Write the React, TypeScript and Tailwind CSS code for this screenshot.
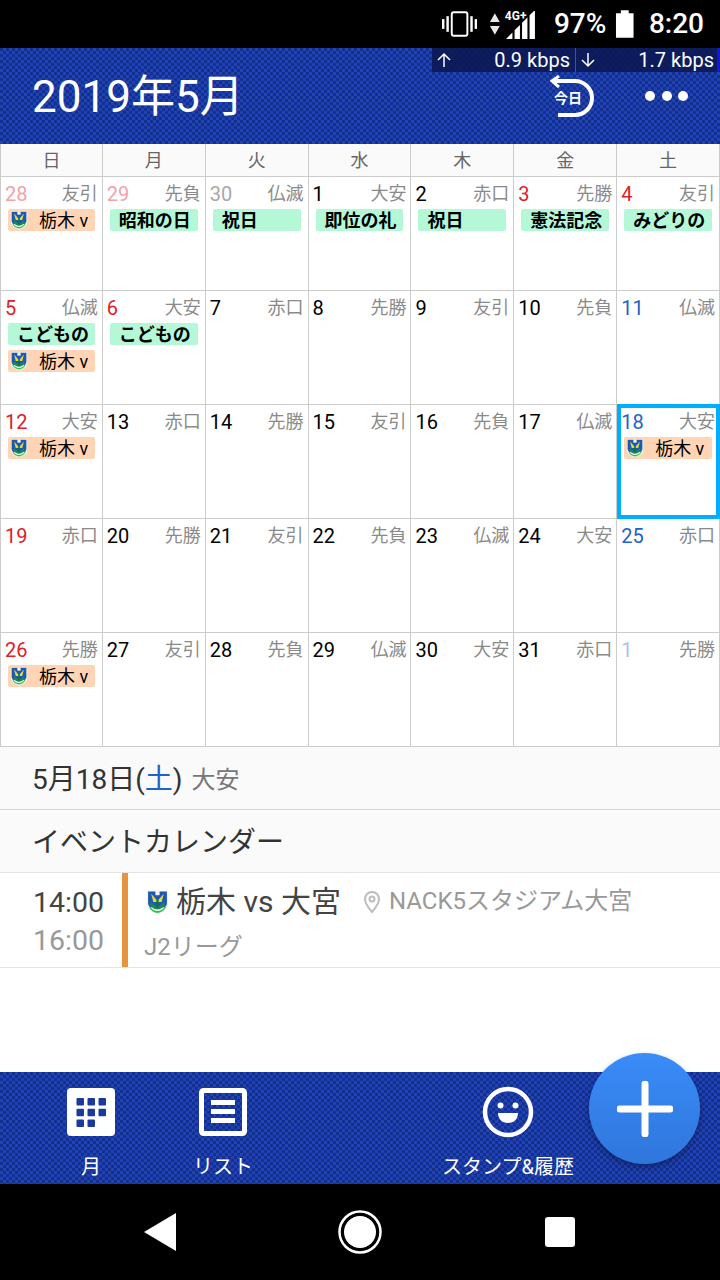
import React from 'react';

const FONT = "font-['Roboto','Noto_Sans_CJK_JP',sans-serif]";
const TEXTURE =
  'bg-[#1a38a4] bg-[conic-gradient(#1f42b6_25%,#14308f_0_50%,#1f42b6_0_75%,#14308f_0)] bg-[length:6px_6px]';

type Ev = 'team' | string;
type Day = { d: number; r: string; c?: string; ev?: Ev[]; sel?: boolean };

const WEEK = ['日', '月', '火', '水', '木', '金', '土'];
const RED = 'text-[#e0202a]';
const BLUE = 'text-[#1e63c8]';

const DAYS: Day[] = [
  { d: 28, r: '友引', c: 'text-[#f2a3a8]', ev: ['team'] },
  { d: 29, r: '先負', c: 'text-[#f2a3a8]', ev: ['昭和の日'] },
  { d: 30, r: '仏滅', c: 'text-[#a8a8a8]', ev: ['祝日'] },
  { d: 1, r: '大安', ev: ['即位の礼'] },
  { d: 2, r: '赤口', ev: ['祝日'] },
  { d: 3, r: '先勝', c: RED, ev: ['憲法記念'] },
  { d: 4, r: '友引', c: RED, ev: ['みどりの'] },
  { d: 5, r: '仏滅', c: RED, ev: ['こどもの', 'team'] },
  { d: 6, r: '大安', c: RED, ev: ['こどもの'] },
  { d: 7, r: '赤口' },
  { d: 8, r: '先勝' },
  { d: 9, r: '友引' },
  { d: 10, r: '先負' },
  { d: 11, r: '仏滅', c: BLUE },
  { d: 12, r: '大安', c: RED, ev: ['team'] },
  { d: 13, r: '赤口' },
  { d: 14, r: '先勝' },
  { d: 15, r: '友引' },
  { d: 16, r: '先負' },
  { d: 17, r: '仏滅' },
  { d: 18, r: '大安', c: BLUE, ev: ['team'], sel: true },
  { d: 19, r: '赤口', c: RED },
  { d: 20, r: '先勝' },
  { d: 21, r: '友引' },
  { d: 22, r: '先負' },
  { d: 23, r: '仏滅' },
  { d: 24, r: '大安' },
  { d: 25, r: '赤口', c: BLUE },
  { d: 26, r: '先勝', c: RED, ev: ['team'] },
  { d: 27, r: '友引' },
  { d: 28, r: '先負' },
  { d: 29, r: '仏滅' },
  { d: 30, r: '大安' },
  { d: 31, r: '赤口' },
  { d: 1, r: '先勝', c: 'text-[#a9c4ec]' },
];

const Crest = ({ w, h }: { w: number; h: number }) => (
  <svg width={w} height={h} viewBox="0 0 22 24" className="shrink-0">
    <path d="M1 1h20v13c0 5-5 8-10 9.500C6 22 1 19 1 14z" fill="#f4f4ee" />
    <path d="M2 2h18v11c0 2-1 3-2 4H4c-1-1-2-2-2-4z" fill="#1c5ab0" />
    <path d="M5 4l6 7 6-7-2 8h-8z" fill="#e8d83c" />
    <path d="M9 1.500h4v4h-4z" fill="#f4f4ee" />
    <path d="M5 12c2 3 4 4 6 4s4-1 6-4l1 3c-2 3-5 4-7 4s-5-1-7-4z" fill="#1c8a58" />
    <path d="M10 10h2v8h-2z" fill="#16703c" />
    <path d="M3 17c2 4 5 5 8 5.500 3-.5 6-1.500 8-5.500l-1-.5c-2 3-4 4-7 4s-5-1-7-4z" fill="#2fbe58" />
  </svg>
);

const EventBar = ({ ev }: { ev: Ev }) =>
  ev === 'team' ? (
    <div className="flex h-[22px] items-center rounded-[2px] bg-[#ffd5b5] pl-[2px] text-[18px] leading-none text-black">
      <Crest w={18} h={20} />
      <span className="mt-[2px] ml-[11px] whitespace-nowrap">栃木 v</span>
    </div>
  ) : (
    <div className="flex h-[22px] items-center rounded-[2px] bg-[#b4f8d8] pt-[2px] pl-[9px] text-[18px] leading-none font-bold whitespace-nowrap text-black">
      {ev}
    </div>
  );

const Cell = ({ day, first }: { day: Day; first: boolean }) => (
  <div className={`relative border-r border-b border-[#cccccc] bg-white ${first ? 'border-l' : ''}`}>
    <div className="flex items-start justify-between pt-[7px] pr-[4px] pl-[4px] leading-none">
      <span className={`text-[20px] leading-[20px] ${day.c ?? 'text-black'}`}>{day.d}</span>
      <span className="text-[18px] leading-[20px] text-[#8a8a8a]">{day.r}</span>
    </div>
    <div className="mt-[5px] flex flex-col gap-[5px] px-[7px]">
      {day.ev?.map((e, i) => <EventBar key={i} ev={e} />)}
    </div>
    {day.sel && <div className="absolute inset-[-1px_-1px_-1px_0] border-[4px] border-[#00aeff]" />}
  </div>
);

const StatusBar = () => (
  <div className="flex h-[48px] items-center bg-black pr-[16px] pl-[442px] text-white">
    <svg width="36" height="28" viewBox="0 0 36 28" fill="none">
      <rect x="10" y="2" width="16" height="24" rx="2" stroke="#fff" strokeWidth="2" />
      <rect x="0" y="9" width="2.500" height="10" fill="#fff" />
      <rect x="4.500" y="6" width="2.500" height="16" fill="#fff" />
      <rect x="29" y="6" width="2.500" height="16" fill="#fff" />
      <rect x="33.500" y="9" width="2.500" height="10" fill="#fff" />
    </svg>
    <svg width="12" height="24" viewBox="0 0 12 24" className="ml-[12px]" fill="#e8e8e8">
      <path d="M6 1l5 9H1z" />
      <path d="M1 14h10l-5 9z" />
    </svg>
    <div className="relative ml-[1px] h-[32px] w-[38px]">
      <span className="absolute top-[2px] left-[3px] text-[12px] leading-none font-bold">4G+</span>
      <svg width="30" height="28" viewBox="0 0 28 26" className="absolute top-[3px] left-[4px]" fill="#fff">
        <path d="M0 26l6-6v6zM8 26v-8l5-5v13zM15 26V11l5-5v20zM22 26V4l5-5v27z" />
      </svg>
    </div>
    <span className="ml-[15px] text-[28px] leading-none font-medium">97%</span>
    <svg width="20" height="28" viewBox="0 0 20 28" className="ml-[9px]" fill="#fff">
      <path d="M6 0h8v3h5v25H1V3h5z" />
    </svg>
    <span className="ml-[14px] text-[28px] leading-none font-medium">8:20</span>
  </div>
);

const TodayIcon = () => (
  <svg width="46" height="46" viewBox="0 0 46 46" fill="none">
    <path d="M4 6h21a17 17 0 0 1 0 34H8" stroke="#fff" strokeWidth="4" />
    <path d="M9 1L2 6l7 6" stroke="#fff" strokeWidth="3" />
  </svg>
);

const Arrow = ({ down }: { down?: boolean }) => (
  <svg width="16" height="16" viewBox="0 0 16 16" fill="none" className={down ? 'rotate-180' : ''}>
    <path d="M8 15V2M2 8l6-6 6 6" stroke="#fff" strokeWidth="1.500" />
  </svg>
);

const Header = () => (
  <div className={`relative flex h-[96px] items-center pl-[32px] ${TEXTURE}`}>
    <span className="mt-[2px] text-[44px] leading-none text-white">2019年5月</span>
    <div className="ml-auto flex items-center pr-[32px]">
      <div className="relative mt-[4px] mr-[49px] h-[46px] w-[46px]">
        <TodayIcon />
        <span className="absolute top-[16px] left-[4px] text-[14px] leading-none font-bold text-white">今日</span>
      </div>
      <div className="flex gap-[6.500px]">
        <span className="h-[10px] w-[10px] rounded-full bg-white" />
        <span className="h-[10px] w-[10px] rounded-full bg-white" />
        <span className="h-[10px] w-[10px] rounded-full bg-white" />
      </div>
    </div>
    <div className="absolute top-0 right-0 flex h-[24px] w-[288px] items-center border-r-[3px] border-[#1018e0] bg-[#0b1650d8] text-[20px] leading-none text-white">
      <div className="flex h-full w-[143px] items-center justify-between pr-[5px] pl-[4px]">
        <Arrow />
        <span>0.9 kbps</span>
      </div>
      <div className="flex h-full flex-1 items-center justify-between border-l border-[#c0263a] pr-[3px] pl-[4px]">
        <Arrow down />
        <span>1.7 kbps</span>
      </div>
    </div>
  </div>
);

const Calendar = () => (
  <div>
    <div className="grid h-[33px] grid-cols-7 border-b border-[#cccccc] bg-[#fafafa]">
      {WEEK.map((w, i) => (
        <div
          key={w}
          className={`flex items-center justify-center border-r border-[#cccccc] text-[18px] text-[#666666] ${i === 0 ? 'border-l' : ''}`}
        >
          {w}
        </div>
      ))}
    </div>
    <div className="grid grid-cols-7 grid-rows-[repeat(5,114px)]">
      {DAYS.map((day, i) => (
        <Cell key={i} day={day} first={i % 7 === 0} />
      ))}
    </div>
  </div>
);

const Detail = () => (
  <div>
    <div className="flex h-[63px] items-center border-b border-[#d8d8d8] bg-[#fafafa] pt-[3px] pl-[32px]">
      <span className="text-[28px] leading-none text-[#333333]">
        5月18日(<span className="text-[#1e63c8]">土</span>)
      </span>
      <span className="ml-[9px] text-[24px] leading-none text-[#777777]">大安</span>
    </div>
    <div className="flex h-[63px] items-center border-b border-[#e4e4e4] bg-[#fafafa] pt-[3px] pl-[32px] text-[28px] leading-none text-[#333333]">
      イベントカレンダー
    </div>
    <div className="flex h-[95px] border-b border-[#e4e4e4] bg-white">
      <div className="flex w-[122px] flex-col items-end gap-[9px] pt-[15px] pr-[18px] text-[28.500px] leading-[29px]">
        <span className="text-[#444444]">14:00</span>
        <span className="text-[#999999]">16:00</span>
      </div>
      <div className="w-[6px] bg-[#e59440]" />
      <div className="pt-[12px] pl-[18px]">
        <div className="flex items-center">
          <Crest w={23} h={26} />
          <span className="ml-[7px] text-[30px] leading-[34px] text-[#444444]">栃木 vs 大宮</span>
          <svg width="18" height="24" viewBox="0 0 18 24" fill="none" className="ml-[22px]">
            <path d="M9 2a7 7 0 0 0-7 7c0 5 7 13 7 13s7-8 7-13a7 7 0 0 0-7-7z" stroke="#bdbdbd" strokeWidth="2" />
            <circle cx="9" cy="9" r="2.500" stroke="#bdbdbd" strokeWidth="2" />
          </svg>
          <span className="mb-[3px] ml-[8px] text-[24px] leading-none whitespace-nowrap text-[#999999]">NACK5スタジアム大宮</span>
        </div>
        <div className="mt-[14px] -ml-[2px] text-[24px] leading-[28px] text-[#999999]">J2リーグ</div>
      </div>
    </div>
  </div>
);

const MonthIcon = () => (
  <svg width="48" height="48" viewBox="0 0 48 48">
    <rect width="48" height="48" rx="4" fill="#fff" />
    {[0, 1, 2, 3, 4, 5, 6, 7].map((i) => (
      <rect key={i} x={9.500 + (i % 3) * 11} y={10 + Math.floor(i / 3) * 10.700} width="7.500" height="7.500" rx="1" fill="#1a389e" />
    ))}
  </svg>
);

const ListIcon = () => (
  <svg width="48" height="48" viewBox="0 0 48 48" fill="none">
    <rect x="2.500" y="2.500" width="43" height="43" rx="2" stroke="#fff" strokeWidth="5" />
    <rect x="12" y="12" width="24" height="5" fill="#fff" />
    <rect x="12" y="21" width="24" height="5" fill="#fff" />
    <rect x="12" y="30" width="24" height="5" fill="#fff" />
  </svg>
);

const SmileIcon = () => (
  <svg width="52" height="52" viewBox="0 0 52 52" fill="none">
    <circle cx="26" cy="26" r="23" stroke="#fff" strokeWidth="4.500" />
    <circle cx="18.500" cy="19.500" r="3" fill="#fff" />
    <circle cx="33.500" cy="19.500" r="3" fill="#fff" />
    <path d="M16 27h20c0 6-4 10-10 10s-10-4-10-10z" fill="#fff" />
  </svg>
);

const TabItem = ({ icon, label, cls }: { icon: React.ReactNode; label: string; cls: string }) => (
  <div className={`flex flex-col items-center ${cls}`}>
    <div className="flex h-[52px] items-center">{icon}</div>
    <span className="mt-[17px] text-[20px] leading-[24px] whitespace-nowrap text-white">{label}</span>
  </div>
);

const TabBar = () => (
  <div className={`relative flex h-[112px] pt-[14px] pl-[25px] ${TEXTURE}`}>
    <TabItem icon={<MonthIcon />} label="月" cls="w-[132px]" />
    <TabItem icon={<ListIcon />} label="リスト" cls="w-[132px]" />
    <TabItem icon={<SmileIcon />} label="スタンプ&履歴" cls="ml-[149px] w-[140px]" />
    <div className="absolute top-[-19px] right-[20px] flex h-[111px] w-[111px] items-center justify-center rounded-full bg-gradient-to-b from-[#3a8cf8] to-[#2f76dc] shadow-[0_3px_6px_rgba(0,0,0,0.35)]">
      <svg width="56" height="56" viewBox="0 0 56 56">
        <path d="M28 3v50M3 28h50" stroke="#fff" strokeWidth="7" strokeLinecap="round" />
      </svg>
    </div>
  </div>
);

const NavBar = () => (
  <div className="flex h-[96px] items-center bg-black pl-[144px]">
    <svg width="32" height="38" viewBox="0 0 32 38">
      <path d="M32 0v38L0 19z" fill="#fff" />
    </svg>
    <svg width="44" height="44" viewBox="0 0 44 44" className="ml-[162px]" fill="none">
      <circle cx="22" cy="22" r="20.500" stroke="#fff" strokeWidth="2.500" />
      <circle cx="22" cy="22" r="16" fill="#fff" />
    </svg>
    <div className="ml-[163px] h-[30px] w-[30px] rounded-[3px] bg-white" />
  </div>
);

export default function App() {
  return (
    <div className={`flex h-[1280px] w-[720px] flex-col overflow-hidden bg-white ${FONT}`}>
      <StatusBar />
      <Header />
      <Calendar />
      <Detail />
      <div className="flex-1 bg-white" />
      <TabBar />
      <NavBar />
    </div>
  );
}
